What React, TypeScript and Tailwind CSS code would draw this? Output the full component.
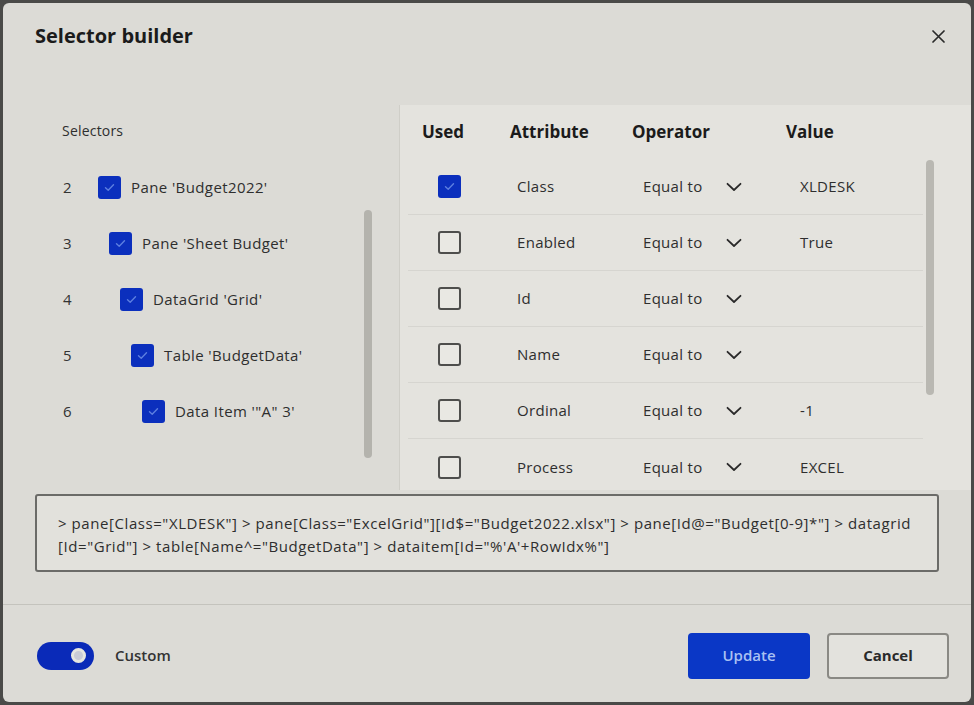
import React from "react";

const font = { fontFamily: '"Open Sans", "Noto Sans", Arial, sans-serif' };

function Check({ checked }: { checked: boolean }) {
  if (checked) {
    return (
      <div className="w-[23px] h-[23px] rounded-[3px] bg-[#0b2fbd] flex items-center justify-center shrink-0">
        <svg width="11" height="9" viewBox="0 0 11 9" fill="none">
          <path d="M1.5 4.8 L4.2 7.2 L9.5 1.8" stroke="#5d7fe0" strokeWidth="1.4" strokeLinecap="round" strokeLinejoin="round" />
        </svg>
      </div>
    );
  }
  return <div className="w-[23px] h-[23px] rounded-[3px] border-2 border-[#4e4e4c] bg-[#e9e8e3] shrink-0" />;
}

function Chevron() {
  return (
    <svg width="16" height="10" viewBox="0 0 16 10" fill="none">
      <path d="M1.5 1.8 L8 8 L14.5 1.8" stroke="#2a2a2a" strokeWidth="1.8" strokeLinecap="round" strokeLinejoin="round" />
    </svg>
  );
}

const selectors = [
  { n: "2", label: "Pane 'Budget2022'", indent: "pl-[35px]" },
  { n: "3", label: "Pane 'Sheet Budget'", indent: "pl-[46px]" },
  { n: "4", label: "DataGrid 'Grid'", indent: "pl-[57px]" },
  { n: "5", label: "Table 'BudgetData'", indent: "pl-[68px]" },
  { n: "6", label: "Data Item '\"A\" 3'", indent: "pl-[79px]" },
];

const attrs = [
  { used: true, name: "Class", value: "XLDESK" },
  { used: false, name: "Enabled", value: "True" },
  { used: false, name: "Id", value: "" },
  { used: false, name: "Name", value: "" },
  { used: false, name: "Ordinal", value: "-1" },
  { used: false, name: "Process", value: "EXCEL" },
];

export default function App() {
  return (
    <div className="w-[974px] h-[705px] bg-[#4a4a48] p-[3px]" style={font}>
      <div className="w-full h-full rounded-[6px] bg-[#dcdbd6] flex flex-col overflow-hidden">
        {/* Header */}
        <div className="h-[102px] flex items-start justify-between pl-[32px] pr-[26px] pt-[18px]">
          <div className="text-[20px] leading-[30px] font-bold text-[#1b1b1b]">Selector builder</div>
          <svg className="mt-[9px]" width="13" height="13" viewBox="0 0 13 13" fill="none">
            <path d="M1 1 L12 12 M12 1 L1 12" stroke="#2a2a2a" strokeWidth="1.7" strokeLinecap="round" />
          </svg>
        </div>

        {/* Body */}
        <div className="h-[385px] flex">
          {/* Left panel */}
          <div className="relative w-[397px] border-r border-[#cfcec8] pt-[16px]">
            <div className="pl-[59px] text-[14px] leading-[20px] tracking-[0.2px] text-[#2e2e2e]">Selectors</div>
            <div className="mt-[18px] flex flex-col">
              {selectors.map((s) => (
                <div key={s.n} className="h-[56px] flex items-center pl-[60px]">
                  <div className="w-0 text-[15px] text-[#333]">{s.n}</div>
                  <div className={`flex items-center gap-[10px] ${s.indent}`}>
                    <Check checked />
                    <span className="text-[15px] tracking-[0.4px] text-[#2e2e2e] whitespace-nowrap">{s.label}</span>
                  </div>
                </div>
              ))}
            </div>
            <div className="absolute left-[361px] top-[105px] w-[8px] h-[248px] rounded-full bg-[#b4b3ad]" />
          </div>

          {/* Right panel */}
          <div className="relative flex-1 bg-[#e4e3de]">
            <div className="h-[54px] flex items-center text-[17px] font-bold text-[#1b1b1b]">
              <div className="w-[110px] pl-[22px]">Used</div>
              <div className="w-[122px]">Attribute</div>
              <div className="w-[154px]">Operator</div>
              <div>Value</div>
            </div>
            {attrs.map((a, i) => (
              <div
                key={a.name}
                className={`h-[56px] mr-[48px] ml-[8px] flex items-center text-[15px] tracking-[0.3px] text-[#2e2e2e] ${i < attrs.length - 1 ? "border-b border-[#d6d5d0]" : ""}`}
              >
                <div className="w-[109px] pl-[30px]">
                  <Check checked={a.used} />
                </div>
                <div className="w-[126px]">{a.name}</div>
                <div className="w-[83px]">Equal to</div>
                <div className="w-[74px]"><Chevron /></div>
                <div>{a.value}</div>
              </div>
            ))}
            <div className="absolute left-[526px] top-[55px] w-[8px] h-[235px] rounded-full bg-[#b9b8b2]" />
          </div>
        </div>

        {/* Selector text */}
        <div className="mx-[32px] mt-[4px] h-[78px] border-2 border-[#6b6b68] rounded-[3px] bg-[#e2e1dc] pl-[21px] pt-[16px] text-[15px] leading-[23px] tracking-[0.57px] text-[#2e2e2e] whitespace-nowrap">
          {'> pane[Class="XLDESK"] > pane[Class="ExcelGrid"][Id$="Budget2022.xlsx"] > pane[Id@="Budget[0-9]*"] > datagrid'}
          <br />
          {'[Id="Grid"] > table[Name^="BudgetData"] > dataitem[Id="%\'A\'+RowIdx%"]'}
        </div>

        {/* Separator */}
        <div className="mt-[32px] h-[1px] bg-[#c4c3bd]" />

        {/* Footer */}
        <div className="flex-1 flex items-center justify-between pl-[34px] pr-[22px] pt-[4px]">
          <div className="flex items-center gap-[21px]">
            <div className="w-[57px] h-[28px] rounded-full bg-[#0a2ab8] flex items-center justify-end pr-[8px]">
              <div className="w-[15px] h-[15px] rounded-full bg-[#c9cbd6] border-[3px] border-[#e6e6e0]" />
            </div>
            <span className="text-[15px] font-semibold text-[#333]">Custom</span>
          </div>
          <div className="flex items-center gap-[17px]">
            <button className="w-[122px] h-[46px] rounded-[4px] bg-[#0a37c6] text-[#a9c0f2] text-[15px] font-semibold">
              Update
            </button>
            <button className="w-[122px] h-[46px] rounded-[4px] border-2 border-[#8a8984] bg-[#e3e2dd] text-[#2a2a2a] text-[15px] font-bold">
              Cancel
            </button>
          </div>
        </div>
      </div>
    </div>
  );
}
